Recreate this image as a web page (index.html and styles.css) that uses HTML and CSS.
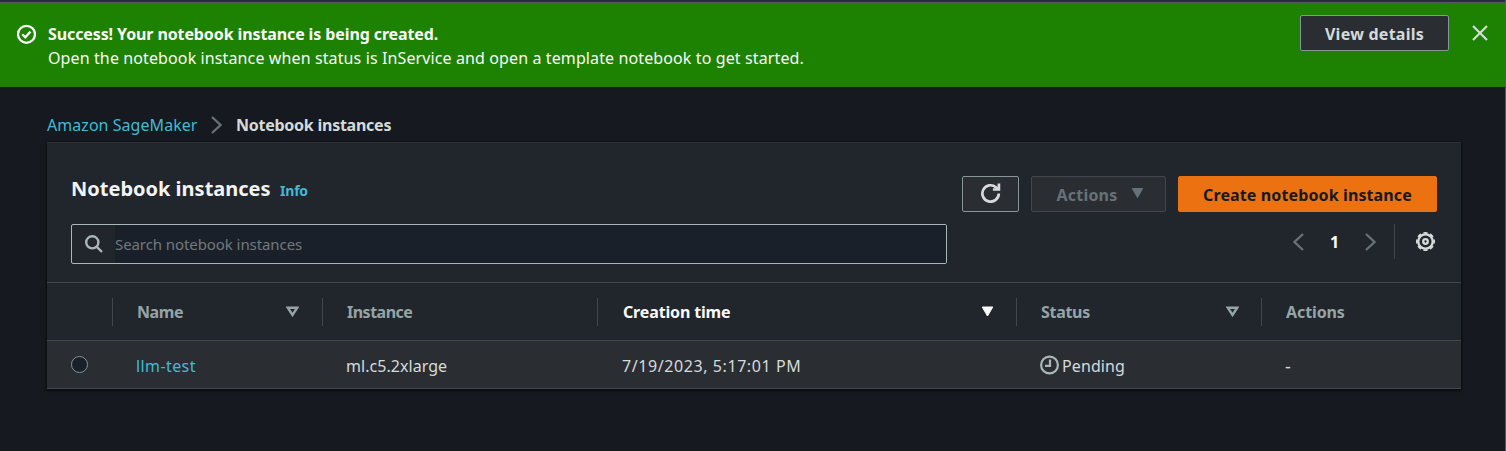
FILE: index.html
```html
<!DOCTYPE html>
<html lang="en">
<head>
<meta charset="utf-8">
<title>Notebook instances</title>
<link rel="stylesheet" href="styles.css">
</head>
<body>
<div class="page">
  <div class="topbar"></div>
  <section class="flash">
    <svg class="flash-icon" viewBox="0 0 20 20"><circle cx="10.500" cy="10.300" r="8.500"/><path d="M6.300 10.300l3 3 5.200-5.700"/></svg>
    <div class="flash-text">
      <div><strong class="t-success">Success! Your notebook instance is being created.</strong></div>
      <div><span class="t-open">Open the notebook instance when status is InService and open a template notebook to get started.</span></div>
    </div>
    <button class="btn btn-view"><span class="t-view">View details</span></button>
    <svg class="close" viewBox="0 0 16 16"><path d="M1 1l14 14M15 1L1 15"/></svg>
  </section>
  <nav class="crumbs">
    <a class="t-crumb1">Amazon SageMaker</a>
    <svg class="crumb-sep" viewBox="0 0 11 18"><path d="M1 1l8.500 8L1 17"/></svg>
    <strong class="t-crumb2">Notebook instances</strong>
  </nav>
  <main class="card">
    <header class="head">
      <div class="title"><h1 class="t-title">Notebook instances</h1><a class="t-info">Info</a></div>
      <div class="buttons">
        <button class="btn btn-refresh"><svg viewBox="0 0 20 20"><path d="M17.800 10.500a8.200 8.200 0 1 1-2.900-6.300L17 6"/><path d="M17.900 0.500v6h-6"/></svg></button>
        <button class="btn btn-disabled"><span class="t-act">Actions</span><svg viewBox="0 0 12 10"><path d="M.8.500h10.400L6 9.500z"/></svg></button>
        <button class="btn btn-primary"><span class="t-create">Create notebook instance</span></button>
      </div>
    </header>
    <div class="tools">
      <div class="search">
        <div class="search-icon"><svg viewBox="0 0 18 18"><circle cx="7.300" cy="7.300" r="6.100"/><path d="M11.800 11.800l5.200 5.200"/></svg></div>
        <div class="search-input"><span class="t-search">Search notebook instances</span></div>
      </div>
      <div class="pager">
        <svg class="arrow" viewBox="0 0 11 18"><path d="M10 1L1.500 9l8.500 8"/></svg>
        <strong class="num">1</strong>
        <svg class="arrow" viewBox="0 0 11 18"><path d="M1 1l8.500 8L1 17"/></svg>
        <i class="rule"></i>
        <svg class="gear" viewBox="0 0 20 20"><circle cx="10.500" cy="9.500" r="7.200"/><circle class="teeth" cx="10.500" cy="9.500" r="8.600" pathLength="80"/><circle cx="10.500" cy="9.500" r="2.300"/></svg>
      </div>
    </div>
    <div class="row thead">
      <div class="cell"></div>
      <div class="cell"><span class="t-name">Name</span><svg class="sort" viewBox="0 0 13 11"><path d="M1.700 1.700h9.600L6.500 9z"/></svg></div>
      <div class="cell"><span class="t-instance">Instance</span></div>
      <div class="cell active"><span class="t-creation">Creation time</span><svg class="sort filled" viewBox="0 0 13 11"><path d="M1.200 1h10.600L6.500 10z"/></svg></div>
      <div class="cell"><span class="t-status">Status</span><svg class="sort" viewBox="0 0 13 11"><path d="M1.700 1.700h9.600L6.500 9z"/></svg></div>
      <div class="cell"><span class="t-hact">Actions</span></div>
    </div>
    <div class="row tbody">
      <div class="cell"><i class="radio"></i></div>
      <div class="cell"><a class="t-llm">llm-test</a></div>
      <div class="cell"><span class="t-ml">ml.c5.2xlarge</span></div>
      <div class="cell"><span class="t-date">7/19/2023, 5:17:01 PM</span></div>
      <div class="cell"><svg class="clock" viewBox="0 0 20 20"><circle cx="9.500" cy="10" r="8.400"/><path d="M10 4.500v6.300H5"/></svg><span class="t-pending">Pending</span></div>
      <div class="cell"><span class="t-dash">-</span></div>
    </div>
  </main>
</div>
</body>
</html>
```
FILE: styles.css
```css
* { box-sizing: border-box; }
body { margin: 0; background: #16191f; font: 16px/24px "Noto Sans", "Open Sans", sans-serif; color: #d5dbdb; }
.page { height: 451px; overflow: hidden; border-right: 1px solid #545b64; }
svg { display: block; flex: none; fill: none; stroke: currentColor; stroke-width: 2; }
a { color: #44b9d6; }
span, strong, a, h1 { white-space: nowrap; }
.topbar { height: 3px; background: #232f3e; border-bottom: 1px solid #545b64; }
.flash { height: 84px; background: #1d8102; color: #fff; display: flex; align-items: flex-start; padding: 12px 17px 0 16px; }
.flash-icon { width: 20px; height: 20px; margin-top: 9px; stroke-width: 2.3; }
.flash-text { flex: 1; margin-left: 12px; padding-top: 7px; color: #fafafa; }
.btn { height: 36px; display: flex; align-items: center; justify-content: center; border: 1px solid #879596; border-radius: 2px; background: #2a2e33; color: #d5dbdb; font: bold 16px/24px "Noto Sans", sans-serif; padding: 2px 0 0; }
.btn-view { width: 149px; }
.close { width: 16px; height: 16px; margin: 10px 0 0 23px; color: #d5dbdb; stroke-width: 2.2; }
.crumbs { height: 55px; padding: 26px 0 0 47px; display: flex; align-items: flex-start; }
.crumb-sep { width: 11px; height: 18px; margin: 3px 14px 0 14px; color: #687078; stroke-width: 2.3; }
.crumbs a { width: 150px; }
.card { width: 1414px; margin-left: 47px; height: 247px; background: #21252c; border-top: 1px solid #2d3134; box-shadow: 0 1px 2px 1px rgba(0,0,0,.5); }
.head { display: flex; justify-content: space-between; padding: 33px 24px 0; height: 81px; }
.title { display: flex; align-items: baseline; }
h1 { margin: 0; font-size: 20px; line-height: 26px; color: #f2f3f3; width: 209px; }
.t-info { font-weight: bold; font-size: 14px; letter-spacing: -.2px; }
.buttons { display: flex; gap: 12px; }
.btn-refresh { width: 57px; padding: 0 0 2px; }
.btn-refresh svg { width: 20px; height: 20px; stroke-width: 2.700; }
.btn-disabled { width: 135px; gap: 14px; border-color: #414750; color: #687078; padding-left: 4px; }
.btn-disabled svg { width: 13px; height: 10px; margin-top: -4px; fill: currentColor; stroke-width: 1; }
.btn-primary { width: 259px; background: #ec7211; border-color: #ec7211; color: #16191f; }
.tools { height: 58px; padding: 0 24px; display: flex; justify-content: space-between; }
.search { width: 876px; height: 40px; border: 1px solid #aab7b8; border-radius: 2px; display: flex; overflow: hidden; }
.search-icon { width: 43px; padding: 10px 0 0 13px; color: #aab7b8; }
.search-icon svg { width: 18px; height: 18px; stroke-width: 2.4; }
.search-input { flex: 1; background: #1a2029; color: #72797e; font-size: 15px; line-height: 39px; }
.pager { display: flex; align-items: center; height: 35px; color: #687078; }
.arrow { width: 11px; height: 18px; stroke-width: 2.3; }
.num { width: 61px; text-align: center; color: #fafafa; font-size: 16px; }
.rule { width: 1px; height: 35px; background: #414750; margin-left: 18px; }
.gear { width: 20px; height: 20px; color: #d5dbdb; margin: 0 2px 0 20px; stroke-width: 2.3; }
.teeth { stroke-width: 1.8; stroke-dasharray: 6.2 3.8; stroke-dashoffset: 3.1; }
.row { display: grid; grid-template-columns: 66px 210px 275px 419px 245px 199px; border-top: 1px solid #414750; }
.cell { display: flex; align-items: center; padding: 2px 22px 0 24px; }
.thead { height: 58px; padding: 15px 0 14px; color: #95a5a6; font-weight: bold; }
.thead .cell { border-right: 1px solid #414750; justify-content: space-between; padding-top: 0; }
.thead .cell:nth-child(2) { padding-right: 23px; }
.thead .cell:last-child { border: 0; }
.thead .active { color: #fafafa; padding-left: 25px; }
.sort { width: 13px; height: 11px; stroke-width: 2.4; margin-top: -1px; }
.filled { fill: currentColor; stroke-width: 1; }
.tbody { height: 49px; background: #2a2e33; border-bottom: 1px solid #414750; }
.tbody .cell { padding-left: 23px; }
.tbody .cell:first-child { padding: 0 0 0 24px; }
.tbody .cell:nth-child(4) { padding-left: 24px; }
.radio { width: 17px; height: 17px; border: 1px solid #879596; border-radius: 50%; background: #1a2029; }
.clock { width: 20px; height: 20px; color: #aab7b8; margin: 0 2px 1px 0; stroke-width: 2.2; }
.t-success { letter-spacing: -.11px; }
.t-open { letter-spacing: .115px; }
.t-view { letter-spacing: .25px; }
.t-crumb1 { letter-spacing: .05px; }
.t-crumb2 { letter-spacing: -.25px; }
.t-search { letter-spacing: -.08px; }
.t-act { letter-spacing: .2px; }
.t-create { letter-spacing: .12px; }
.t-name { letter-spacing: -.4px; }
.t-instance { letter-spacing: -.5px; }
.t-creation { letter-spacing: -.15px; }
.t-status { letter-spacing: -.3px; }
.t-hact { letter-spacing: -.1px; }
.t-llm { letter-spacing: .4px; }
.t-ml { letter-spacing: .05px; }
.t-date { letter-spacing: .58px; }
.t-pending { letter-spacing: .1px; }
.t-dash { font-size: 18px; }
```
